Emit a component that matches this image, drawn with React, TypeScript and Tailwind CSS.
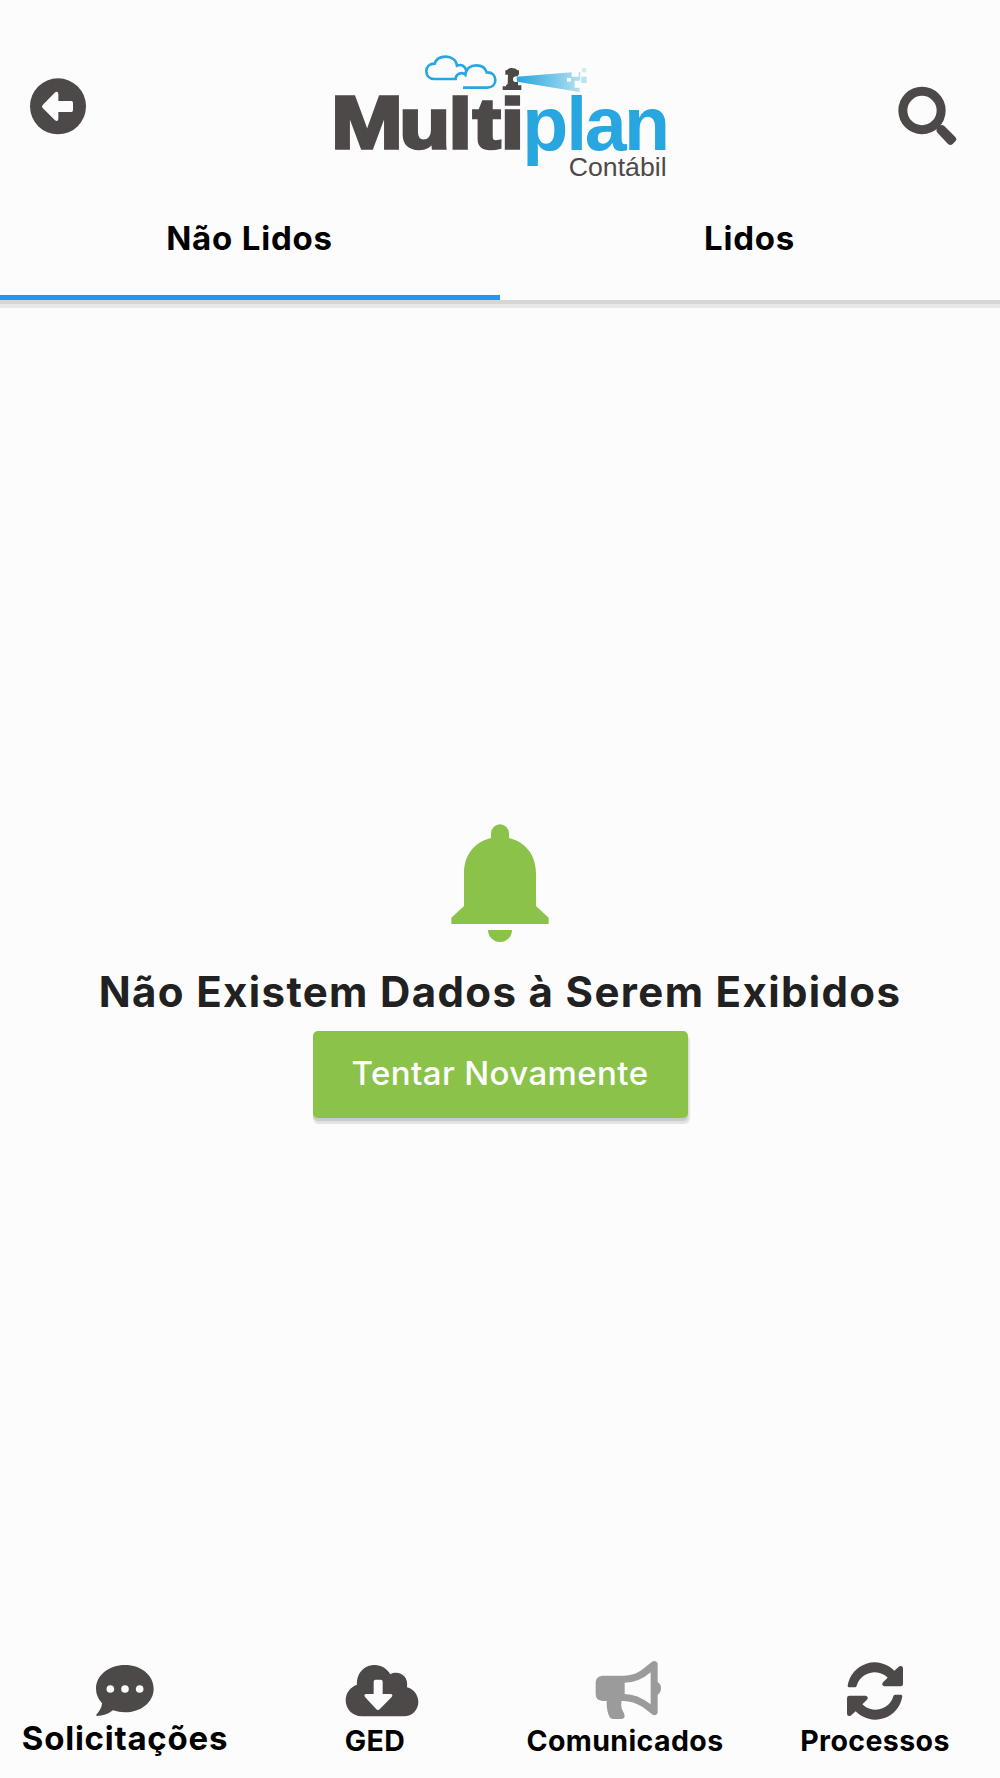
import { useState } from "react";

const BackIcon = () => (
  <svg viewBox="87 54 174 174" className="size-[58px]">
    <circle cx="174" cy="139" r="84" fill="#4d4948" />
    <path
      d="M128 135 L164 98 Q174 91 175 102 V123 H214 Q219 123 219 128 V151 Q219 156 214 156 H175 V177 Q174 187 165 181 L128 144 Q124 139 128 135 Z"
      fill="#fcfcfc"
    />
  </svg>
);

const SearchIcon = () => (
  <svg viewBox="711 78 180 180" className="size-[60px]">
    <circle cx="786" cy="151.500" r="57.500" fill="none" stroke="#4d4948" strokeWidth="27" />
    <path
      d="M832 202 L838 197 Q846 192 853 198 L886 231 Q892 238 886 244 L878 252 Q871 258 864 252 L833 219 Q828 213 830 207 Z"
      fill="#4d4948"
    />
  </svg>
);

const Logo = () => (
  <svg
    viewBox="0 0 1080 450"
    className="h-[150px] w-[360px] font-['Liberation_Sans',Arial,sans-serif]"
  >
    <defs>
      <linearGradient id="beam" x1="0" x2="1">
        <stop offset="0" stopColor="#2aa6df" />
        <stop offset="0.5" stopColor="#6ac2e8" />
        <stop offset="1" stopColor="#b5e0f3" />
      </linearGradient>
    </defs>

    {/* nuvens */}
    <g fill="none" stroke="#27a6e0" strokeWidth="8">
      <path d="M410 117 H343 C327 117 319 106 319 94 C319 80 329 71 344 71 C348 58 361 50 377 50 C396 50 409 61 411 77 C425 71 437 80 438 91" />
      <path d="M429 143 H501 C518 143 526 132 526 120 C526 107 517 96 500 97 C496 82 483 76 469 76 C451 76 438 87 436 104 C425 94 407 101 406 120" />
    </g>

    {/* farol */}
    <path
      d="M556 104 V91 H560 Q565 84 575 84 Q587 84 593 91 H597 V104 H594 V109 Q580 107 580 118 Q580 128 594 126 V136 H604 V150 H548 V139 H558 V136 L563 132 L564 104 Z"
      fill="#4d4948"
    />
    <ellipse cx="585" cy="118" rx="6" ry="8" fill="#fcfcfc" />
    <path
      d="M590 110 L755 97 V110 H776 V96 H781 V122 H764 V143 H779 V156 L591 125 Z"
      fill="url(#beam)"
    />
    <rect x="741" y="114" width="12" height="11" fill="#fcfcfc" />
    <rect x="786" y="84" width="13" height="13" fill="#cfebf7" />
    <rect x="784" y="110" width="16" height="19" fill="#b9e2f4" />

    <g transform="scale(1.17 1)">
      <text
        x="28.8 203.8 330 392 464"
        y="325"
        fontSize="212"
        fontWeight="700"
        fill="#4d4948"
        stroke="#4d4948"
        strokeWidth="10"
      >
        <tspan fontSize="220">M</tspan>ulti
      </text>
    </g>
    <text x="607 739 794 912" y="330" fontSize="226" fontWeight="700" fill="#27a6e0">
      plan
    </text>
    <text x="746" y="408" fontSize="80" textLength="294" fill="#4d4948">
      Contábil
    </text>
  </svg>
);

const BellIcon = () => (
  <svg viewBox="0 0 294 356" className="h-[118.67px] w-[98px]" fill="#8bc34a">
    <path d="M120 42 V28 A27 27 0 0 1 174 28 V42 C226 55 255 95 255 148 V246 L293 281 V300 H1 V281 L39 246 V148 C39 95 68 55 120 42 Z" />
    <path d="M111 318 H183 A36 36 0 0 1 111 318 Z" />
  </svg>
);

const ChatIcon = () => (
  <svg viewBox="286 70 178 160" className="h-[53.33px] w-[59.33px]">
    <path
      d="M376 73 C424 73 462 104 462 144 C462 184 424 215 376 215 Q357 215 340 209 Q318 226 292 226 Q287 225 291 221 Q307 203 307 187 Q289 168 289 144 C289 104 328 73 376 73 Z"
      fill="#4d4948"
    />
    <circle cx="332" cy="145" r="11.500" fill="#fcfcfc" />
    <circle cx="376" cy="145" r="11.500" fill="#fcfcfc" />
    <circle cx="420" cy="145" r="11.500" fill="#fcfcfc" />
  </svg>
);

const CloudIcon = () => (
  <svg viewBox="1036 70 222 160" className="h-[53.33px] w-[74px]">
    <path
      d="M1087 227 C1059 227 1038 206 1038 179 C1038 157 1052 139 1072 132 C1070 99 1093 73 1125 73 C1146 73 1162 84 1172 101 C1195 88 1228 104 1222 140 C1242 145 1256 163 1256 184 C1256 208 1237 227 1213 227 Z"
      fill="#4d4948"
    />
    <path
      d="M1128 117 H1143 Q1149 117 1149 123 V160 H1172 Q1182 161 1176 169 L1140 206 Q1135 211 1130 206 L1096 169 Q1091 161 1100 160 H1122 V123 Q1122 117 1128 117 Z"
      fill="#fcfcfc"
    />
  </svg>
);

const MegaphoneIcon = () => (
  <svg viewBox="286 60 200 180" className="h-[60px] w-[66.67px]">
    <path
      fillRule="evenodd"
      d="M308 107 H373 Q402 107 425 91 L456 66 Q467 58 474 70 V126 Q484 132 484 145 Q484 158 474 164 V219 Q468 230 457 223 L429 201 Q397 181 366 183 Q361 205 373 220 Q379 236 365 237 H340 Q334 237 330 232 Q320 212 321 183 H309 Q288 181 288 162 V127 Q289 109 308 107 Z M375 128 V162 Q413 162 453 193 V97 Q418 128 375 128 Z"
      fill="#9b9b9b"
    />
  </svg>
);

const SyncIcon = () => (
  <svg viewBox="1038 63 174 174" className="size-[58px]" fill="#4d4948">
    <path d="M1043 134 A82 82 0 0 1 1183 89 L1198 76 Q1208 72 1209 82 V129 Q1209 136 1202 136 H1153 Q1143 133 1149 124 L1163 110 A56 56 0 0 0 1070 134 Q1069 139 1065 139 H1047 Q1043 139 1043 134 Z" />
    <path d="M1207 166 A82 82 0 0 1 1067 211 L1052 224 Q1042 228 1041 218 V171 Q1041 164 1048 164 H1097 Q1107 167 1101 176 L1087 190 A56 56 0 0 0 1180 166 Q1181 161 1185 161 H1203 Q1207 161 1207 166 Z" />
  </svg>
);

const tabs = ["Não Lidos", "Lidos"];

const App = () => {
  const [active, setActive] = useState(0);

  return (
    <div className="flex h-[1778px] w-[1000px] flex-col overflow-hidden bg-[#fcfcfc] font-['Inter',sans-serif] text-black">
      {/* HEADER */}
      <header className="h-[300px] shrink-0 shadow-[0_4px_0_#d6d6d6,0_8px_0_#e8e8e8]">
        <div className="flex h-[190px] items-start justify-between pl-[29px] pr-[43px]">
          <button className="mt-[78px]">
            <BackIcon />
          </button>
          <div className="ml-4 mt-10">
            <Logo />
          </div>
          <button className="mt-[86px]">
            <SearchIcon />
          </button>
        </div>

        <div className="grid h-[110px] grid-cols-2">
          {tabs.map((tab, i) => (
            <button
              key={tab}
              onClick={() => setActive(i)}
              className={`flex justify-center border-b-[5px] pt-[23px] pr-[1px] text-[33px] leading-[50px] font-bold tracking-[0.8px] ${
                active === i ? "border-[#2196f3]" : "border-transparent"
              }`}
            >
              {tab}
            </button>
          ))}
        </div>
      </header>

      {/* SEM DADOS */}
      <main className="flex flex-1 flex-col items-center pt-[524px]">
        <BellIcon />
        <h1 className="mt-[24px] text-[42px] leading-[50px] font-bold tracking-[1.35px] whitespace-nowrap text-[#212121]">
          Não Existem Dados à Serem Exibidos
        </h1>
        <button className="mt-[14px] h-[87px] w-[375px] rounded-[5px] bg-[#8bc34a] text-[33px] font-medium tracking-[0.4px] whitespace-nowrap text-white shadow-[0_3px_1px_#0000001c,1px_5px_1px_1px_#0000001a]">
          Tentar Novamente
        </button>
      </main>

      {/* MENU INFERIOR */}
      <nav className="grid h-[118px] shrink-0 grid-cols-4 text-[28.5px] leading-[36px] font-bold">
        <div className="flex flex-col items-center pt-[4px]">
          <ChatIcon />
          <span className="mt-[1px] text-[33px] leading-[40px] tracking-[0.75px]">Solicitações</span>
        </div>
        <div className="flex flex-col items-center pt-[4px]">
          <div className="ml-[14.67px]">
            <CloudIcon />
          </div>
          <span className="mt-[5.67px] tracking-[0.4px]">GED</span>
        </div>
        <div className="flex flex-col items-center">
          <div className="ml-[7px]">
            <MegaphoneIcon />
          </div>
          <span className="mt-[3px] tracking-[0.4px]">Comunicados</span>
        </div>
        <div className="flex flex-col items-center pt-[2px]">
          <SyncIcon />
          <span className="mt-[3px] tracking-[0.4px]">Processos</span>
        </div>
      </nav>
    </div>
  );
};

export default App;
